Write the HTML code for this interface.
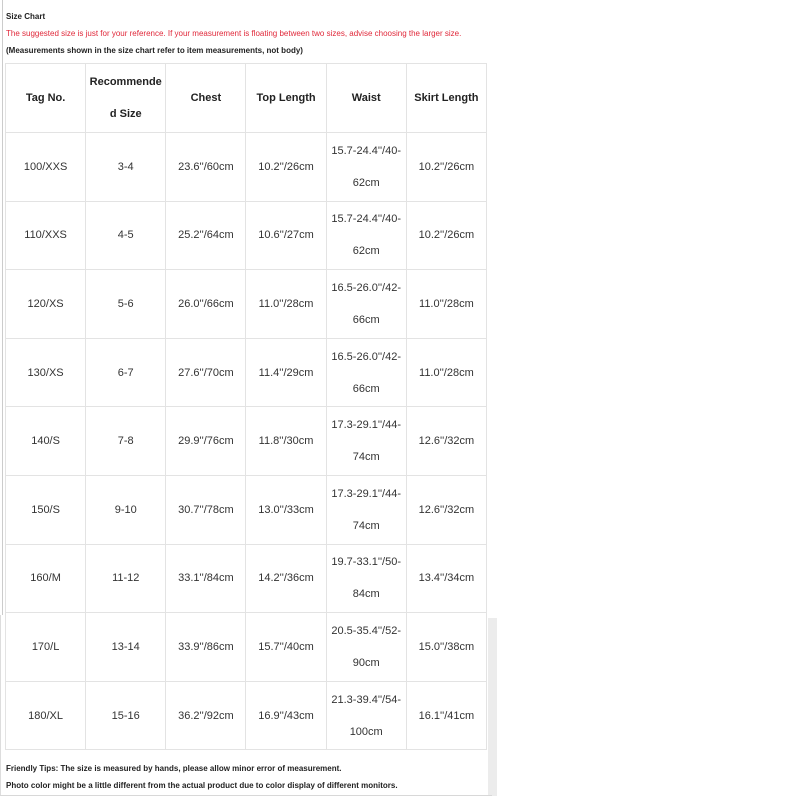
<!DOCTYPE html>
<html><head><meta charset="utf-8"><style>
*{margin:0;padding:0;box-sizing:border-box}
body{width:800px;height:800px;background:#fff;font-family:"Liberation Sans",Arial,sans-serif;position:relative;overflow:hidden}
.t{position:absolute;left:6px;font-size:8px;white-space:nowrap}
.vl{position:absolute;left:2px;top:0;width:1px;height:615px;background:#ccc}
.sh{position:absolute;left:488px;top:618px;width:9px;height:178px;background:#ececec}
.bl{position:absolute;left:0;top:795px;width:492px;height:1px;background:#d8d8d8}
.vl2{position:absolute;left:0px;top:615px;width:1px;height:180px;background:#ddd}
table{position:absolute;left:5px;top:63px;border-collapse:collapse;width:482px}
td{border:1px solid #e3e3e3;text-align:center;vertical-align:middle;font-size:11px;color:#333;line-height:32px;width:80px;padding:0 2px}
tr.h td{height:69px;font-weight:bold;color:#222}
tr.r td{height:68.6px}
</style></head><body>
<div class="vl"></div><div class="vl2"></div>
<div class="t" style="top:12px;font-weight:bold;color:#222">Size Chart</div>
<div class="t" style="top:29px;color:#e0283a">The suggested size is just for your reference. If your measurement is floating between two sizes, advise choosing the larger size.</div>
<div class="t" style="top:46px;font-weight:bold;color:#222">(Measurements shown in the size chart refer to item measurements, not body)</div>
<table>
<tr class="h"><td>Tag No.</td><td>Recommende<br>d Size</td><td>Chest</td><td>Top Length</td><td>Waist</td><td>Skirt Length</td></tr>
<tr class="r"><td>100/XXS</td><td>3-4</td><td>23.6''/60cm</td><td>10.2''/26cm</td><td>15.7-24.4''/40-<br>62cm</td><td>10.2''/26cm</td></tr>
<tr class="r"><td>110/XXS</td><td>4-5</td><td>25.2''/64cm</td><td>10.6''/27cm</td><td>15.7-24.4''/40-<br>62cm</td><td>10.2''/26cm</td></tr>
<tr class="r"><td>120/XS</td><td>5-6</td><td>26.0''/66cm</td><td>11.0''/28cm</td><td>16.5-26.0''/42-<br>66cm</td><td>11.0''/28cm</td></tr>
<tr class="r"><td>130/XS</td><td>6-7</td><td>27.6''/70cm</td><td>11.4''/29cm</td><td>16.5-26.0''/42-<br>66cm</td><td>11.0''/28cm</td></tr>
<tr class="r"><td>140/S</td><td>7-8</td><td>29.9''/76cm</td><td>11.8''/30cm</td><td>17.3-29.1''/44-<br>74cm</td><td>12.6''/32cm</td></tr>
<tr class="r"><td>150/S</td><td>9-10</td><td>30.7''/78cm</td><td>13.0''/33cm</td><td>17.3-29.1''/44-<br>74cm</td><td>12.6''/32cm</td></tr>
<tr class="r"><td>160/M</td><td>11-12</td><td>33.1''/84cm</td><td>14.2''/36cm</td><td>19.7-33.1''/50-<br>84cm</td><td>13.4''/34cm</td></tr>
<tr class="r"><td>170/L</td><td>13-14</td><td>33.9''/86cm</td><td>15.7''/40cm</td><td>20.5-35.4''/52-<br>90cm</td><td>15.0''/38cm</td></tr>
<tr class="r"><td>180/XL</td><td>15-16</td><td>36.2''/92cm</td><td>16.9''/43cm</td><td>21.3-39.4''/54-<br>100cm</td><td>16.1''/41cm</td></tr>
</table>
<div class="sh"></div><div class="bl"></div>
<div class="t" style="top:764px;font-weight:bold;color:#222">Friendly Tips: The size is measured by hands, please allow minor error of measurement.</div>
<div class="t" style="top:781px;font-weight:bold;color:#222">Photo color might be a little different from the actual product due to color display of different monitors.</div>
</body></html>
